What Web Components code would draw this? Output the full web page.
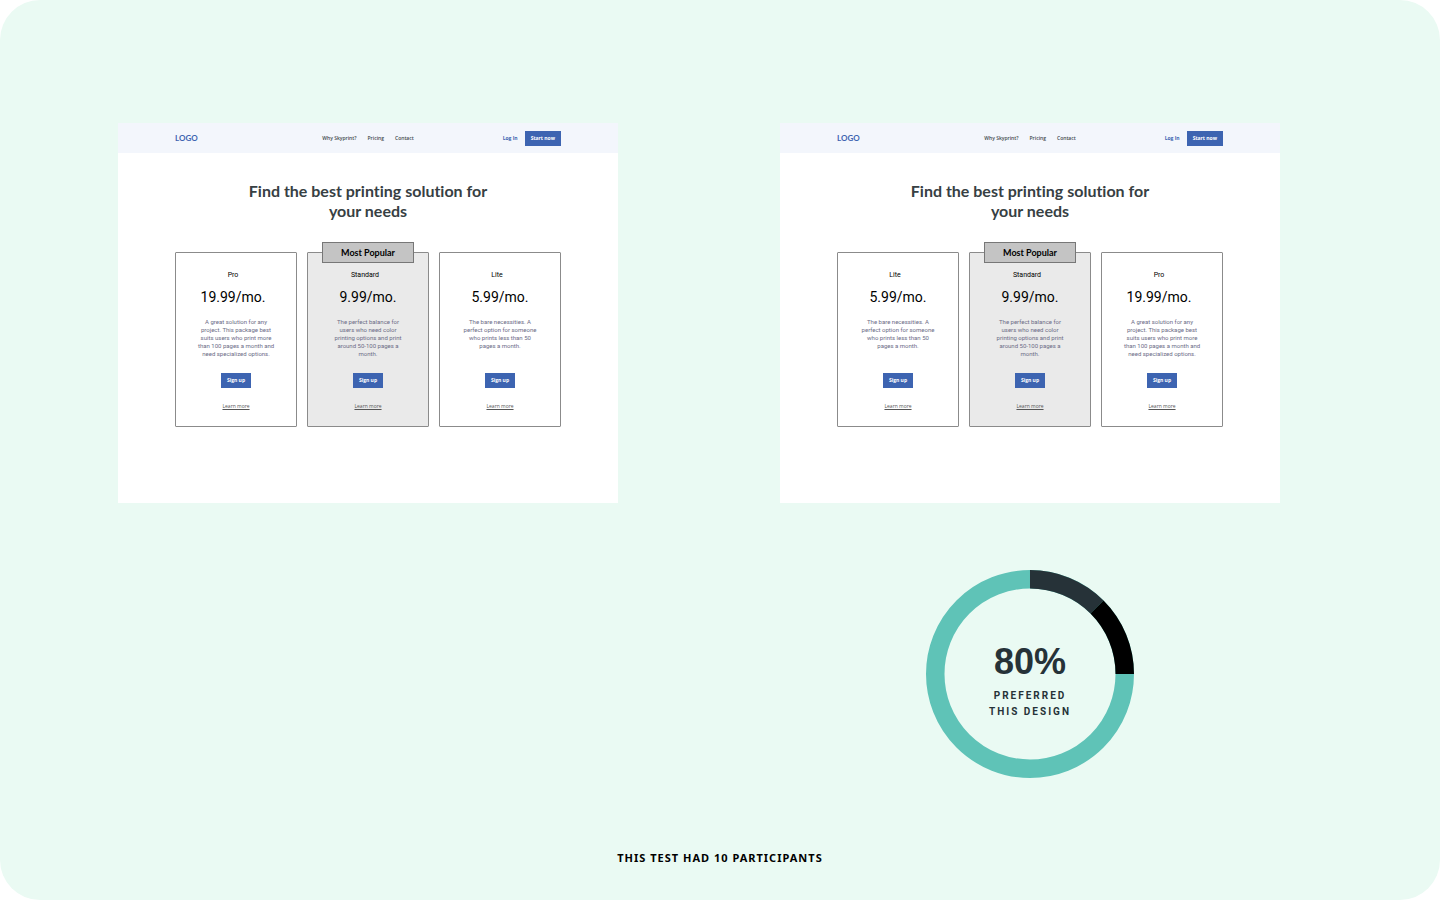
<!DOCTYPE html>
<html lang="en">
<head>
<meta charset="utf-8">
<title>Preference test results</title>
<style>
  body { margin: 0; background: #fff; }
</style>
</head>
<body>
<preference-test>
  <pricing-mockup slot="a" order="pro standard lite"></pricing-mockup>
  <pricing-mockup slot="b" order="lite standard pro"></pricing-mockup>
  <score-ring slot="score"><span slot="value">80%</span>PREFERRED<br>THIS DESIGN</score-ring>
  <span slot="note">THIS TEST HAD 10 PARTICIPANTS</span>
</preference-test>

<script>
const define = (name, html, setup) => {
  const template = document.createElement('template');
  template.innerHTML = html;
  customElements.define(name, class extends HTMLElement {
    constructor() {
      super();
      this.attachShadow({ mode: 'open' }).append(template.content.cloneNode(true));
    }
    connectedCallback() {
      if (setup && !this.ready) { this.ready = true; setup(this, this.shadowRoot); }
    }
  });
};

define('preference-test', `
  <style>
    :host {
      display: flex; flex-direction: column; box-sizing: border-box; min-height: 100vh;
      padding: 123px 0 34px; border-radius: 40px; background: #eafaf3;
      font-family: Roboto, sans-serif;
    }
    main { display: grid; grid-template-columns: 1fr 1fr; column-gap: 162px; row-gap: 67px; padding: 0 160px 0 118px; }
    .score { grid-column: 2; justify-self: center; }
    footer { margin-top: auto; text-align: center; font: 700 11px/16px "Noto Sans", sans-serif; letter-spacing: 1px; color: #000; }
  </style>
  <main>
    <slot name="a"></slot>
    <slot name="b"></slot>
    <div class="score"><slot name="score"></slot></div>
  </main>
  <footer><slot name="note"></slot></footer>
`);

define('action-button', `
  <style>
    :host { display: block; }
    button {
      display: block; margin: 0; padding: 0 6px; border: 0; background: #3d64b1; color: #fff;
      font: 700 5px/15px "Open Sans", sans-serif;
    }
  </style>
  <button type="button"><slot></slot></button>
`);

define('site-header', `
  <style>
    :host { display: grid; grid-template-columns: 1fr auto 1fr; align-items: center; height: 30px; padding: 0 57px; background: #f3f6fc; font-family: "Open Sans", sans-serif; }
    a { color: inherit; text-decoration: none; }
    .logo { font: 700 8px/12px Lato, sans-serif; color: #3d64b1; }
    nav { display: flex; gap: 11px; font-size: 5px; line-height: 8px; font-weight: 600; color: #3f484c; }
    .account { display: flex; justify-content: flex-end; align-items: center; gap: 7px; font-size: 5px; line-height: 8px; font-weight: 700; color: #3d64b1; }
  </style>
  <a class="logo" href="#">LOGO</a>
  <nav><a href="#">Why Skyprint?</a><a href="#">Pricing</a><a href="#">Contact</a></nav>
  <div class="account"><a href="#">Log In</a><action-button>Start now</action-button></div>
`);

define('plan-card', `
  <style>
    :host {
      display: flex; flex-direction: column; align-items: center; box-sizing: border-box; position: relative;
      height: 175px; padding-top: 18px; border: 1px solid #8b8b8b; border-radius: 1px;
      background: #fff; text-align: center; font-family: Roboto, sans-serif; color: #000;
    }
    :host([featured]) { background: #eaeaea; }
    h2 { margin: 0; font-size: 7px; line-height: 8px; font-weight: 400; }
    .price { margin: 10px 0 0; font-size: 14px; line-height: 16px; }
    h2, :host([plan="pro"]) .price { padding-right: 6px; }
    .about { width: 76px; height: 41px; margin: 13px 0 14px; font-size: 6px; line-height: 8px; color: #6c6c86; }
    .about span { display: block; white-space: nowrap; }
    a { margin-top: 14px; font: 400 5px/8px "Open Sans", sans-serif; color: #555; text-decoration: underline; }
    .badge {
      position: absolute; top: -11px; left: 14px; right: 14px; box-sizing: border-box; height: 21px;
      border: 1px solid #777; background: #c4c4c4; font: 700 9px/19px Lato, sans-serif;
    }
  </style>
  <div class="badge">Most Popular</div>
  <h2></h2>
  <p class="price"></p>
  <p class="about"></p>
  <action-button>Sign up</action-button>
  <a href="#">Learn more</a>
`, (host, root) => {
  const plan = plans[host.getAttribute('plan')];
  root.querySelector('h2').textContent = plan.name;
  root.querySelector('.price').textContent = plan.price;
  root.querySelector('.about').append(...plan.about.map(text => {
    const line = document.createElement('span');
    line.textContent = text;
    return line;
  }));
  if (!host.hasAttribute('featured')) root.querySelector('.badge').remove();
});

const plans = {
  pro: { name: 'Pro', price: '19.99/mo.', about: ['A great solution for any', 'project. This package best', 'suits users who print more', 'than 100 pages a month and', 'need specialized options.'] },
  standard: { name: 'Standard', price: '9.99/mo.', about: ['The perfect balance for', 'users who need color', 'printing options and print', 'around 50-100 pages a', 'month.'] },
  lite: { name: 'Lite', price: '5.99/mo.', about: ['The bare necessities. A', 'perfect option for someone', 'who prints less than 50', 'pages a month.'] }
};

define('pricing-mockup', `
  <style>
    :host { display: block; min-width: 0; min-height: 380px; background: #fff; }
    h1 { margin: 28px 0 31px; text-align: center; font: 700 16px/20px Lato, sans-serif; font-variant-ligatures: none; color: #374043; }
    .plans { display: grid; grid-template-columns: repeat(3, 1fr); gap: 10px; padding: 0 57px; }
  </style>
  <site-header></site-header>
  <h1>Find the best printing solution for<br>your needs</h1>
  <div class="plans"></div>
`, (host, root) => {
  for (const name of host.getAttribute('order').split(' ')) {
    const card = document.createElement('plan-card');
    card.setAttribute('plan', name);
    if (name === 'standard') card.setAttribute('featured', '');
    root.querySelector('.plans').append(card);
  }
});

define('score-ring', `
  <style>
    :host { display: grid; width: 208px; color: #263238; text-align: center; }
    svg, .label { grid-area: 1 / 1; }
    svg { display: block; width: 100%; }
    .label { align-self: center; padding-top: 15px; }
    .value { font: 700 36px/38px "Liberation Sans", sans-serif; }
    .caption { margin-top: 7px; font-size: 10px; line-height: 16px; font-weight: 700; letter-spacing: 2px; }
  </style>
  <svg viewBox="0 0 208 208" aria-hidden="true">
    <g fill="none" stroke-width="18.5">
      <circle cx="104" cy="104" r="94.75" stroke="#5fc3b7"/>
      <path d="M104 9.25A94.75 94.75 0 0 1 171 37" stroke="#263238"/>
      <path d="M171 37A94.75 94.75 0 0 1 198.75 104" stroke="#000"/>
    </g>
  </svg>
  <div class="label">
    <div class="value"><slot name="value"></slot></div>
    <div class="caption"><slot></slot></div>
  </div>
`);
</script>
</body>
</html>
